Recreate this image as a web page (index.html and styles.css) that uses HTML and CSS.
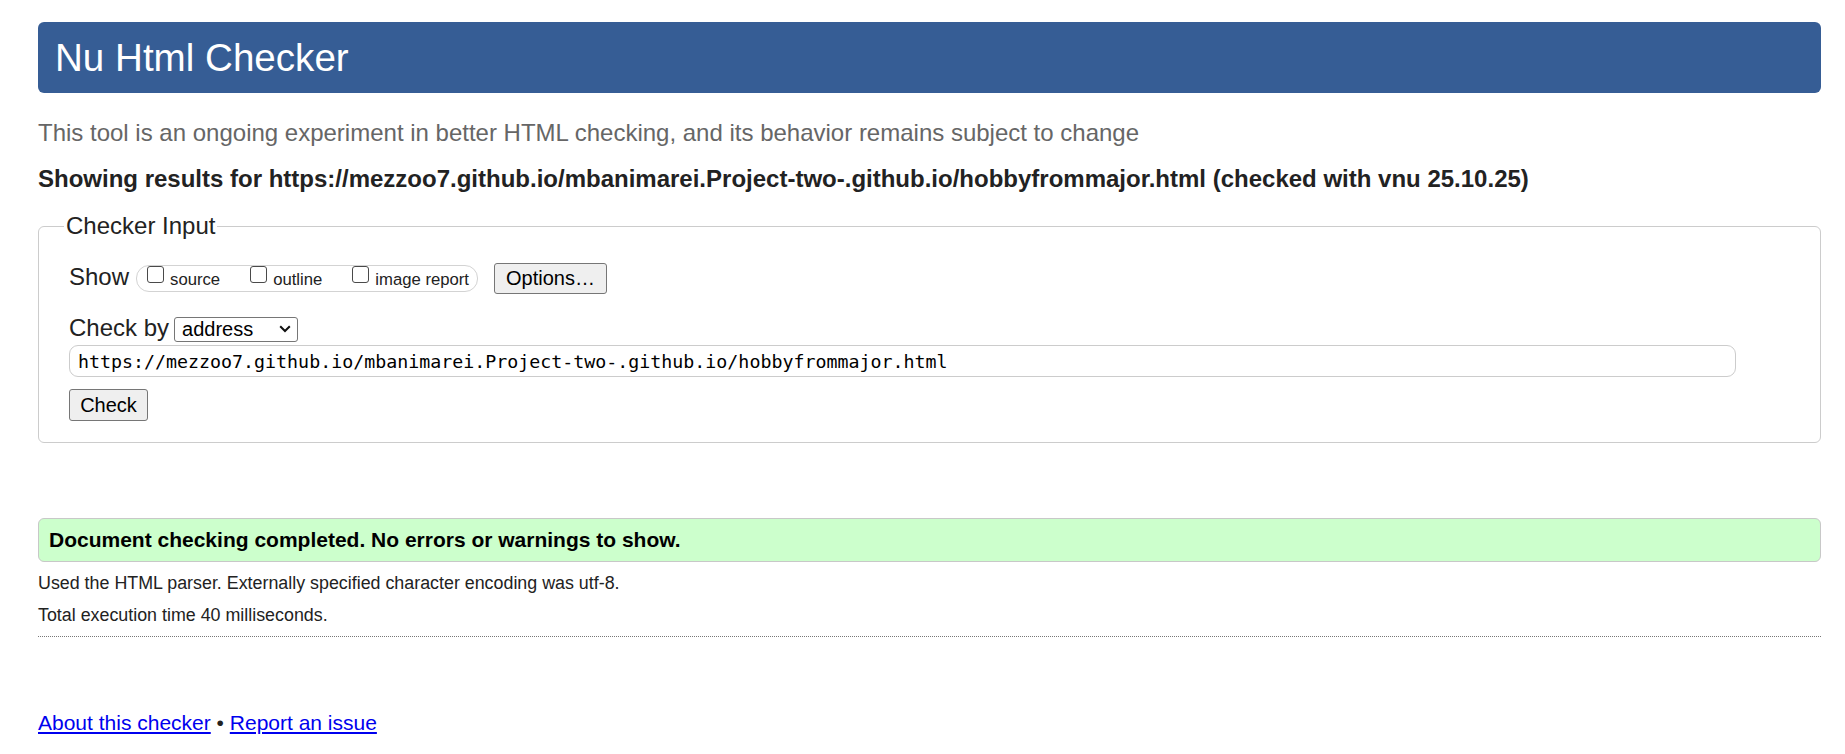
FILE: index.html
```html
<!DOCTYPE html>
<html lang="en">
<head>
<meta charset="utf-8">
<title>Nu Html Checker</title>
<link rel="stylesheet" href="styles.css">
</head>
<body>
<h1 class="title">Nu Html Checker</h1>
<p class="intro">This tool is an ongoing experiment in better HTML checking, and its behavior remains subject to change</p>
<p class="showing">Showing results for https://mezzoo7.github.io/mbanimarei.Project-two-.github.io/hobbyfrommajor.html (checked with vnu 25.10.25)</p>
<form class="form">
<fieldset class="inputs">
<legend class="legend">Checker Input</legend>
<div class="row row-show">
<span class="label">Show</span>
<span class="pill">
<label class="opt"><input type="checkbox" class="cb"><span class="opt-text">source</span></label>
<label class="opt"><input type="checkbox" class="cb"><span class="opt-text">outline</span></label>
<label class="opt last"><input type="checkbox" class="cb"><span class="opt-text">image report</span></label>
</span>
<button type="button" class="btn btn-options">Options…</button>
</div>
<div class="row row-by">
<span class="label">Check by</span>
<span class="select-wrap">
<select class="select"><option>address</option></select>
<svg class="chev" width="12" height="8" viewBox="0 0 12 8"><polyline points="1.2,1.2 6,6 10.8,1.2" fill="none" stroke="#111" stroke-width="2"/></svg>
</span>
</div>
<input class="url" type="url" value="https://mezzoo7.github.io/mbanimarei.Project-two-.github.io/hobbyfrommajor.html">
<div class="row-check"><button type="button" class="btn btn-check">Check</button></div>
</fieldset>
</form>
<div class="success"><p class="success-text">Document checking completed. No errors or warnings to show.</p></div>
<p class="stats stats-first">Used the HTML parser. Externally specified character encoding was utf-8.</p>
<p class="stats">Total execution time 40 milliseconds.</p>
<hr class="sep">
<p class="footer"><a href="#" class="link">About this checker</a> • <a href="#" class="link">Report an issue</a></p>
</body>
</html>
```
FILE: styles.css
```css
html, body {
  background: #fff;
}
body {
  margin: 0;
  padding: 22px 24px 0 38px;
  font-family: "Liberation Sans", Arial, sans-serif;
  color: #222;
}
.title {
  margin: 0;
  height: 71px;
  line-height: 71px;
  padding-left: 17px;
  background: #365d95;
  color: #fff;
  font-size: 38.6px;
  font-weight: normal;
  border-radius: 6px;
}
.intro {
  margin: 26px 0 0;
  font-size: 24px;
  line-height: 28px;
  color: #666;
}
.showing {
  margin: 18px 0 0;
  font-size: 24px;
  line-height: 28px;
  font-weight: bold;
  color: #222;
}
.form {
  margin: 18px 0 0;
}
.inputs {
  margin: 0;
  border: 1px solid #ccc;
  border-radius: 6px;
  padding: 22px 30px 21px 30px;
  min-width: 0;
}
.legend {
  font-size: 24px;
  line-height: 30px;
  padding: 0 2px;
  margin-left: -5px;
  color: #222;
}
.row {
  display: flex;
  align-items: flex-start;
}
.label {
  font-size: 24px;
  line-height: 27px;
  color: #222;
}
.row-show .label {
  margin-right: 7px;
}
.pill {
  margin-top: 2px;
  height: 27px;
  box-sizing: border-box;
  border: 1px solid #d3d3d3;
  border-radius: 13px;
  display: flex;
  align-items: flex-start;
  padding: 0 8px 0 10px;
}
.opt {
  display: flex;
  align-items: flex-start;
  margin-right: 30px;
}
.opt.last {
  margin-right: 0;
}
.cb {
  appearance: none;
  -webkit-appearance: none;
  width: 17px;
  height: 17px;
  margin: 0;
  box-sizing: border-box;
  border: 1.5px solid #4a4a4a;
  border-radius: 3px;
  background: #fff;
}
.opt-text {
  margin-left: 6px;
  margin-top: 4px;
  font-size: 16.7px;
  line-height: 20px;
  color: #222;
}
.btn {
  font-family: "Liberation Sans", Arial, sans-serif;
  font-size: 20px;
  color: #000;
  background: #efefef;
  border: 1px solid #767676;
  border-radius: 3px;
  box-sizing: border-box;
  padding: 0;
  margin: 0;
}
.btn-options {
  margin-left: 16px;
  width: 113px;
  height: 31px;
}
.row-by {
  margin-top: 20px;
}
.row-by .label {
  margin-right: 5px;
}
.select-wrap {
  position: relative;
  margin-top: 3px;
  display: block;
}
.select {
  appearance: none;
  -webkit-appearance: none;
  display: block;
  width: 124px;
  height: 25px;
  box-sizing: border-box;
  border: 1px solid #767676;
  border-radius: 3px;
  background: #fff;
  font-family: "Liberation Sans", Arial, sans-serif;
  font-size: 20px;
  color: #000;
  padding: 0 0 0 7px;
  margin: 0;
  line-height: 23px;
}
.chev {
  position: absolute;
  right: 7px;
  top: 8px;
  pointer-events: none;
}
.url {
  display: block;
  margin: 3px 0 0;
  width: 100%;
  max-width: 1667px;
  height: 32px;
  box-sizing: border-box;
  border: 1px solid #ccc;
  border-radius: 9px;
  padding: 0 8px;
  font-family: "DejaVu Sans Mono", "Liberation Mono", monospace;
  font-size: 18.3px;
  color: #000;
  background: #fff;
}
.row-check {
  margin-top: 12px;
}
.btn-check {
  width: 79px;
  height: 32px;
}
.success {
  margin-top: 75px;
  height: 44px;
  box-sizing: border-box;
  border: 1px solid #c8c8c8;
  border-radius: 6px;
  background: #ccffcc;
  padding: 0 10px;
}
.success-text {
  margin: 0;
  font-size: 21px;
  line-height: 42px;
  font-weight: bold;
  color: #000;
}
.stats {
  margin: 8px 0 0;
  font-size: 17.85px;
  line-height: 24px;
  color: #222;
}
.stats-first {
  margin-top: 9px;
}
.sep {
  margin: 9px 0 0;
  border: 0;
  border-top: 1px dotted #777;
  height: 0;
}
.footer {
  margin: 73px 0 0;
  font-size: 21px;
  line-height: 26px;
  color: #222;
}
.link {
  color: #0000ee;
  text-decoration: underline;
}
```
